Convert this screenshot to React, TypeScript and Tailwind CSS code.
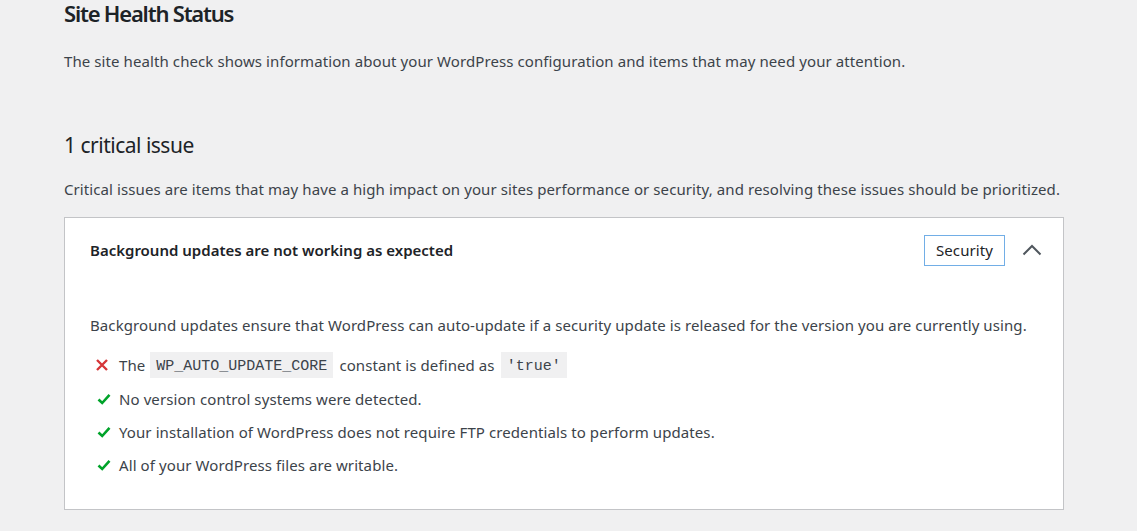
import React from "react";

const font = { fontFamily: '"Noto Sans", "Open Sans", sans-serif' };

function Check() {
  return (
    <svg width="16" height="16" viewBox="0 0 16 16" className="shrink-0">
      <path d="M2.5 8.5 L6.2 12 L13.5 3.8" fill="none" stroke="#00a32a" strokeWidth="2.6" strokeLinecap="butt" strokeLinejoin="miter" />
    </svg>
  );
}

function Cross() {
  return (
    <svg width="16" height="16" viewBox="0 0 16 16" className="shrink-0">
      <path d="M3 3 L13 13 M13 3 L3 13" fill="none" stroke="#d63638" strokeWidth="2.4" />
    </svg>
  );
}

function Code({ children }: { children: React.ReactNode }) {
  return (
    <code className="bg-[#f0f0f1] px-[6px] pt-[4px] h-[26px] inline-flex items-center text-[15px] tracking-normal text-[#3c434a] font-['Liberation_Mono',monospace]">
      {children}
    </code>
  );
}

export default function App() {
  return (
    <div className="min-h-screen bg-[#f0f0f1] px-[64px] text-[#3c434a] tracking-[0.09px]" style={font}>
      <h1 className="m-0 h-[26px] leading-[26px] text-[22px] font-semibold tracking-[-1.2px] text-[#1d2327]">Site Health Status</h1>
      <p className="mt-[23px] h-[24px] leading-[24px] text-[15px]">
        The site health check shows information about your WordPress configuration and items that may need your attention.
      </p>
      <h2 className="mt-[57px] h-[30px] leading-[30px] text-[21px] tracking-[-0.5px] text-[#1d2327]">1 critical issue</h2>
      <p className="mt-[17px] h-[24px] leading-[24px] text-[15px]">
        Critical issues are items that may have a high impact on your sites performance or security, and resolving these issues should be prioritized.
      </p>
      <div className="mt-[16px] w-[1000px] border border-[#c3c4c7] bg-white">
        <div className="h-[64px] flex items-center pl-[25px] pr-[11px]">
          <div className="flex-1 text-[15px] font-semibold tracking-normal text-[#1d2327]">Background updates are not working as expected</div>
          <span className="h-[31px] px-[11px] flex items-center border border-[#72aee6] text-[15px] text-[#1d2327]">Security</span>
          <button className="ml-[7px] w-[40px] h-[31px] flex items-center justify-center">
            <svg width="20" height="12" viewBox="0 0 20 12">
              <path d="M1.5 10.5 L10 2 L18.5 10.5" fill="none" stroke="#50575e" strokeWidth="2" />
            </svg>
          </button>
        </div>
        <div className="pl-[25px] pr-[25px] pt-[31px] pb-[32px]">
          <p className="h-[24px] leading-[24px] text-[15px]">
            Background updates ensure that WordPress can auto-update if a security update is released for the version you are currently using.
          </p>
          <ul className="mt-[15px] flex flex-col gap-[9px] text-[15px]">
            <li className="h-[26px] flex items-center pl-[4px]">
              <Cross />
              <span className="ml-[9px]">The</span>
              <span className="ml-[5px]"><Code>WP_AUTO_UPDATE_CORE</Code></span>
              <span className="ml-[6px]">constant is defined as</span>
              <span className="ml-[6px]"><Code>'true'</Code></span>
            </li>
            <li className="h-[24px] flex items-center pl-[6px]">
              <Check />
              <span className="ml-[7px]">No version control systems were detected.</span>
            </li>
            <li className="h-[24px] flex items-center pl-[6px]">
              <Check />
              <span className="ml-[7px]">Your installation of WordPress does not require FTP credentials to perform updates.</span>
            </li>
            <li className="h-[24px] flex items-center pl-[6px]">
              <Check />
              <span className="ml-[7px]">All of your WordPress files are writable.</span>
            </li>
          </ul>
        </div>
      </div>
    </div>
  );
}
